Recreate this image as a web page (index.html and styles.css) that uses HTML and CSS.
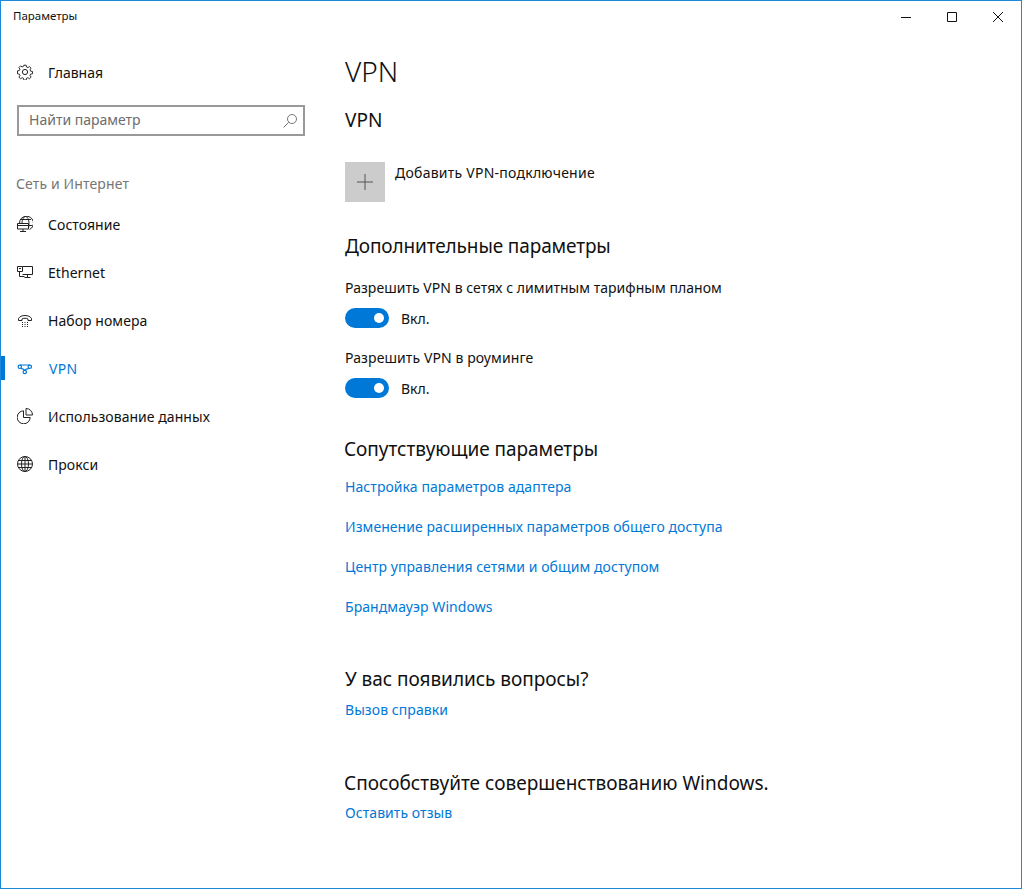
FILE: index.html
```html
<!DOCTYPE html>
<html lang="ru">
<head>
<meta charset="utf-8">
<title>Параметры</title>
<link rel="stylesheet" href="styles.css">
</head>
<body>
<div class="window">
  <header class="titlebar">
    <span class="app-title">Параметры</span>
    <div class="controls">
      <span class="control"><svg width="12" height="12" viewBox="0 0 12 12"><path d="M1 6.500h10" stroke="#111" fill="none"/></svg></span>
      <span class="control"><svg width="12" height="12" viewBox="0 0 12 12"><path d="M1.500 1.500h9v9h-9z" stroke="#111" fill="none"/></svg></span>
      <span class="control"><svg width="12" height="12" viewBox="0 0 12 12"><path d="M1 1l10 10M11 1L1 11" stroke="#111" fill="none"/></svg></span>
    </div>
  </header>
  <div class="content">
    <aside class="sidebar">
      <div class="home">
        <svg class="icon" width="16" height="16" viewBox="0 0 16 16" fill="none" stroke="#222" stroke-width="1"><circle cx="8" cy="8" r="2.600"/><path d="M6.800.8h2.400l.4 2 1.400.6 1.700-1.100 1.700 1.700-1.100 1.700.6 1.400 2 .4v2.400l-2 .4-.6 1.400 1.100 1.700-1.700 1.700-1.700-1.100-1.400.6-.4 2H6.800l-.4-2-1.400-.6-1.700 1.100-1.700-1.700 1.100-1.700-.6-1.400-2-.4V6.800l2-.4.6-1.400-1.100-1.700 1.700-1.700L5 2.700l1.400-.6z" transform="translate(.4 .4) scale(.95)"/></svg>
        <span>Главная</span>
      </div>
      <div class="search">
        <span class="search-text">Найти параметр</span>
        <svg width="16" height="16" viewBox="0 0 16 16" fill="none" stroke="#777"><circle cx="10" cy="6" r="4.500"/><path d="M6.700 9.300L1.500 14.500"/></svg>
      </div>
      <div class="section">Сеть и Интернет</div>
      <nav class="nav">
        <div class="nav-item">
          <svg class="icon" width="16" height="16" viewBox="0 0 16 16" fill="none" stroke="#222"><path d="M2.500 7A7 7 0 1 1 12.500 13.500"/><path d="M5 7C5.200 3.500 6.800.5 8.500.5c2 0 3.500 3.300 3.500 7 0 2-.3 3.500-.5 5"/><path d="M3 3.500h11M12 9.500h3.300"/><path d="M.5 7.500h11v5.500H.5zM.5 9.500h11M6 13v2.500M3 15.500h6"/></svg>
          <span>Состояние</span>
        </div>
        <div class="nav-item">
          <svg class="icon" width="16" height="16" viewBox="0 0 16 16" fill="none" stroke="#222"><path d="M5.500 2.500h10v8H5.500M.5 2.500h5v5h-5zM2.500 7.500v5h5M10.500 10.500v3M7.500 13.500h6M2 4.500h2"/></svg>
          <span>Ethernet</span>
        </div>
        <div class="nav-item">
          <svg class="icon" width="16" height="16" viewBox="0 0 16 16" fill="none" stroke="#222"><path d="M1.500 8.500V6.500C3.500 2.500 12.500 2.500 14.500 6.500v2H11V7C10 6 6 6 5 7v1.500H1.500z"/><path d="M5 10.500h1M7.500 10.500h1M10 10.500h1M5 12.500h1M7.500 12.500h1M10 12.500h1M5 14.500h1M7.500 14.500h1M10 14.500h1"/></svg>
          <span>Набор номера</span>
        </div>
        <div class="nav-item is-active">
          <svg class="icon" width="16" height="16" viewBox="0 0 16 16" fill="none" stroke="#0078d7" stroke-width="1.200"><circle cx="2.800" cy="6.800" r="1.700"/><circle cx="12.800" cy="6.800" r="1.700"/><circle cx="7.800" cy="12" r="1.700"/><path d="M2.800 5h10M3.800 8.300c2 .4 3.500 1 4 2.200M11.800 8.300c-2 .4-3.500 1-4 2.200"/></svg>
          <span class="active-label">VPN</span>
        </div>
        <div class="nav-item">
          <svg class="icon" width="16" height="16" viewBox="0 0 16 16" fill="none" stroke="#222"><path d="M6.500 2.800A6.500 6.500 0 1 0 13.200 9.500H6.500z"/><path d="M9 .5a6.500 6.500 0 0 1 6.500 6.500H9z"/></svg>
          <span>Использование данных</span>
        </div>
        <div class="nav-item">
          <svg class="icon" width="16" height="16" viewBox="0 0 16 16" fill="none" stroke="#222"><circle cx="8" cy="8" r="7.500"/><ellipse cx="8" cy="8" rx="3.500" ry="7.500"/><path d="M.5 8h15M1.500 4.500h13M1.500 11.500h13M8 .5v15"/></svg>
          <span>Прокси</span>
        </div>
      </nav>
    </aside>
    <main class="main">
      <h1 class="page-title">VPN</h1>
      <h2 class="vpn-heading">VPN</h2>
      <div class="add-row">
        <span class="add-tile"><svg width="16" height="16" viewBox="0 0 16 16" fill="none" stroke="#555"><path d="M8 0v16M0 8h16"/></svg></span>
        <span class="add-label">Добавить VPN-подключение</span>
      </div>
      <h2 class="heading advanced">Дополнительные параметры</h2>
      <div class="setting">
        <div class="setting-label">Разрешить VPN в сетях с лимитным тарифным планом</div>
        <div class="toggle-row"><span class="toggle"><span class="knob"></span></span><span>Вкл.</span></div>
      </div>
      <div class="setting roaming">
        <div class="setting-label">Разрешить VPN в роуминге</div>
        <div class="toggle-row"><span class="toggle"><span class="knob"></span></span><span>Вкл.</span></div>
      </div>
      <h2 class="heading related">Сопутствующие параметры</h2>
      <div class="links">
        <a class="link">Настройка параметров адаптера</a>
        <a class="link">Изменение расширенных параметров общего доступа</a>
        <a class="link">Центр управления сетями и общим доступом</a>
        <a class="link">Брандмауэр Windows</a>
      </div>
      <h2 class="heading questions">У вас появились вопросы?</h2>
      <a class="link single">Вызов справки</a>
      <h2 class="heading improve">Способствуйте совершенствованию Windows.</h2>
      <a class="link single">Оставить отзыв</a>
    </main>
  </div>
</div>
</body>
</html>
```

FILE: styles.css
```css
* { box-sizing: border-box; }
html, body { margin: 0; height: 100%; }
body {
  font-family: "Noto Sans", "Open Sans", sans-serif;
  font-size: 14px;
  color: #111;
  background: #fff;
}
.window {
  width: 1022px;
  height: 889px;
  border: 1px solid #1a8ad9;
  display: flex;
  flex-direction: column;
  overflow: hidden;
}
.titlebar {
  height: 31px;
  display: flex;
  align-items: center;
  justify-content: space-between;
  padding-left: 12px;
  flex: none;
}
.app-title { font-size: 11.5px; margin-bottom: 2px; }
.controls { display: flex; }
.control {
  width: 46px;
  height: 30px;
  display: flex;
  align-items: center;
  justify-content: center;
}
.content { display: flex; flex: 1; min-height: 0; }
.sidebar { width: 344px; flex: none; }
.home {
  display: flex;
  align-items: center;
  height: 24px;
  margin-top: 28px;
  padding-left: 16px;
  gap: 15px;
}
.icon { flex: none; }
.search {
  margin: 21px 0 0 16px;
  width: 288px;
  height: 31px;
  border: 2px solid #999;
  display: flex;
  align-items: center;
  justify-content: space-between;
  padding: 0 5px 0 10px;
  color: #6d6d6d;
}
.search-text { margin-bottom: 2px; }
.section {
  margin: 37px 0 0 15px;
  height: 22px;
  line-height: 22px;
  color: #767676;
  letter-spacing: .13px;
}
.nav { margin-top: 5px; }
.nav-item {
  height: 48px;
  display: flex;
  align-items: center;
  padding-left: 16px;
  gap: 15px;
  position: relative;
  letter-spacing: .05px;
}
.nav-item.is-active { color: #0078d7; }
.active-label { margin-left: 1px; letter-spacing: .3px; }
.nav-item.is-active::before {
  content: "";
  position: absolute;
  left: 0;
  top: 12px;
  width: 4px;
  height: 24px;
  background: #0078d7;
}
.main { flex: 1; min-width: 0; }
.page-title {
  margin: 19px 0 0;
  font-size: 28px;
  font-weight: 300;
  line-height: 40px;
}
.vpn-heading {
  margin: 15px 0 0;
  font-size: 19px;
  font-weight: 400;
  line-height: 28px;
}
.add-row { display: flex; margin-top: 28px; gap: 10px; }
.add-tile {
  width: 40px;
  height: 40px;
  background: #ccc;
  display: flex;
  align-items: center;
  justify-content: center;
}
.add-label { line-height: 22px; letter-spacing: .25px; }
.heading {
  font-size: 19px;
  font-weight: 400;
  line-height: 28px;
  margin: 0;
  letter-spacing: -.04px;
}
.advanced { margin-top: 30px; letter-spacing: -.12px; }
.setting { margin-top: 18px; }
.setting-label { line-height: 20px; letter-spacing: .04px; }
.toggle-row {
  display: flex;
  align-items: center;
  gap: 12px;
  height: 20px;
  margin-top: 10px;
}
.toggle {
  width: 44px;
  height: 20px;
  border-radius: 10px;
  background: #0078d7;
  display: flex;
  align-items: center;
  justify-content: flex-end;
  padding-right: 5px;
}
.knob { width: 10px; height: 10px; border-radius: 50%; background: #fff; }
.roaming { margin-top: 20px; }
.roaming .setting-label { letter-spacing: .1px; }
.related { margin-top: 37px; margin-left: -1px; }
.links { display: flex; flex-direction: column; gap: 20px; margin-top: 14px; align-items: flex-start; }
.link { color: #0078d7; line-height: 20px; letter-spacing: .07px; }
.single { display: block; }
.questions { margin-top: 48px; }
.improve { margin-top: 49px; margin-left: -1px; letter-spacing: 0; }
.questions + .link { margin-top: 7px; }
.improve + .link { margin-top: 6px; }
```
